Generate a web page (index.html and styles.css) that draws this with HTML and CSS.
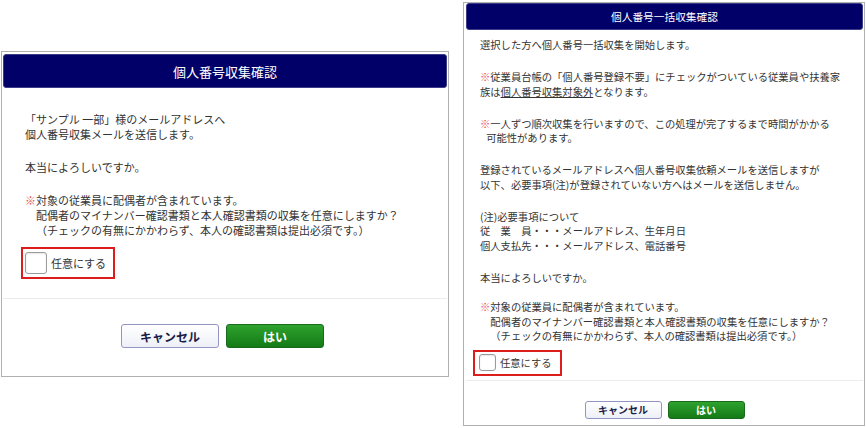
FILE: index.html
```html
<!DOCTYPE html>
<html lang="ja">
<head>
  <meta charset="UTF-8" />
  <title>個人番号収集確認</title>
  <link rel="stylesheet" href="styles.css">
</head>
<body>
  <div class="page">
    <div class="dialog dialog-single">
      <div class="dialog-head">個人番号収集確認</div>
      <div class="dialog-body">
        <p>「サンプル 一部」様のメールアドレスへ<br>個人番号収集メールを送信します。</p>
        <p>本当によろしいですか。</p>
        <p><span class="mark">※</span>対象の従業員に配偶者が含まれています。<br><span class="indent">配偶者のマイナンバー確認書類と本人確認書類の収集を任意にしますか？</span><br><span class="indent">（チェックの有無にかかわらず、本人の確認書類は提出必須です。）</span></p>
        <label class="option"><span class="check"></span>任意にする</label>
      </div>
      <div class="dialog-foot">
        <button class="btn btn-cancel">キャンセル</button>
        <button class="btn btn-ok">はい</button>
      </div>
    </div>

    <div class="dialog dialog-bulk">
      <div class="dialog-head">個人番号一括収集確認</div>
      <div class="dialog-body">
        <p>選択した方へ個人番号一括収集を開始します。</p>
        <p><span class="mark">※</span>従業員台帳の「個人番号登録不要」にチェックがついている従業員や扶養家<br>族は<u>個人番号収集対象外</u>となります。</p>
        <p><span class="mark">※</span>一人ずつ順次収集を行いますので、この処理が完了するまで時間がかかる<br><span class="half">可能性があります。</span></p>
        <p>登録されているメールアドレスへ個人番号収集依頼メールを送信しますが<br>以下、必要事項(注)が登録されていない方へはメールを送信しません。</p>
        <p>(注)必要事項について<br>従　業　員・・・メールアドレス、生年月日<br>個人支払先・・・メールアドレス、電話番号</p>
        <p>本当によろしいですか。</p>
        <p><span class="mark">※</span>対象の従業員に配偶者が含まれています。<br><span class="indent">配偶者のマイナンバー確認書類と本人確認書類の収集を任意にしますか？</span><br><span class="indent">（チェックの有無にかかわらず、本人の確認書類は提出必須です。）</span></p>
        <label class="option"><span class="check"></span>任意にする</label>
      </div>
      <div class="dialog-foot">
        <button class="btn btn-cancel">キャンセル</button>
        <button class="btn btn-ok">はい</button>
      </div>
    </div>
  </div>
</body>
</html>
```

FILE: styles.css
```css
body {
  margin: 0;
  background: #fff;
  font-family: "Noto Sans CJK JP", "Noto Sans", sans-serif;
  color: #333;
}

.page {
  display: flex;
  align-items: flex-start;
  gap: 14px;
  padding: 2px 0 0 1px;
}

.dialog {
  box-sizing: border-box;
  border: 1px solid #b0b0b0;
  background: #fff;
}

.dialog-head {
  display: flex;
  align-items: center;
  justify-content: center;
  background: #000068;
  border: 1px solid #3c3c88;
  border-radius: 3px;
  color: #fff;
}

.dialog-body p {
  margin: 0;
  white-space: nowrap;
}

.mark {
  color: #e8504a;
}

.indent {
  padding-left: 1em;
}

.half {
  padding-left: 0.6em;
}

.option {
  display: inline-flex;
  align-items: center;
  border: 2px solid #dd1c1c;
}

.check {
  box-sizing: border-box;
  border: 1px solid #9a9a9a;
  border-radius: 3px;
  background: #fff;
  box-shadow: inset 0 1px 2px rgba(0, 0, 0, 0.1);
}

.dialog-foot {
  display: flex;
  justify-content: center;
  border-top: 1px solid #ececec;
}

.btn {
  box-sizing: border-box;
  border-radius: 3px;
  font-family: inherit;
  font-weight: bold;
  padding: 0;
  cursor: pointer;
}

.btn-cancel {
  background: linear-gradient(#ffffff, #eef0f8);
  border: 1px solid #9494c4;
  color: #1c1c48;
}

.btn-ok {
  background: linear-gradient(#2ea22e, #147a16);
  border: 1px solid #1a6a1c;
  color: #fff;
}

/* single-person dialog */
.dialog-single {
  width: 448px;
  height: 326px;
  margin-top: 49px;
  padding: 2px 1px 0;
}

.dialog-single .dialog-head {
  height: 32px;
  font-size: 13px;
}

.dialog-single .dialog-body {
  padding: 24px 22px 0;
  font-size: 11px;
}

.dialog-single .dialog-body p {
  line-height: 15px;
  margin-bottom: 18px;
}

.dialog-single .dialog-body p:nth-child(3) {
  margin-bottom: 9px;
}

.dialog-single .option {
  margin-left: -4px;
  height: 32px;
  box-sizing: border-box;
  padding: 0 7px 0 2px;
  gap: 4px;
  font-size: 11px;
}

.dialog-single .check {
  width: 22px;
  height: 22px;
}

.dialog-single .dialog-foot {
  margin-top: 19px;
  padding: 25px 5px 0 0;
  gap: 7px;
}

.dialog-single .btn {
  width: 98px;
  height: 24px;
  font-size: 12px;
}

/* bulk dialog */
.dialog-bulk {
  width: 402px;
  height: 424px;
  padding: 0 1px 0 2px;
}

.dialog-bulk .dialog-head {
  height: 25px;
  font-size: 10.7px;
}

.dialog-bulk .dialog-body {
  padding: 8px 14px 0;
  font-size: 10.3px;
}

.dialog-bulk .dialog-body p {
  line-height: 14.5px;
  margin-bottom: 17.5px;
}

.dialog-bulk .dialog-body p:nth-child(6) {
  margin-bottom: 15px;
}

.dialog-bulk .dialog-body p:nth-child(7) {
  margin-bottom: 6px;
}

.dialog-bulk .option {
  margin-left: -7px;
  height: 26px;
  box-sizing: border-box;
  padding: 0 8px 0 4px;
  gap: 4px;
  font-size: 10.3px;
}

.dialog-bulk .check {
  width: 17px;
  height: 17px;
}

.dialog-bulk .dialog-foot {
  margin-top: 4px;
  padding-top: 20px;
  gap: 6px;
}

.dialog-bulk .btn {
  width: 77px;
  height: 18px;
  font-size: 10px;
}
```
